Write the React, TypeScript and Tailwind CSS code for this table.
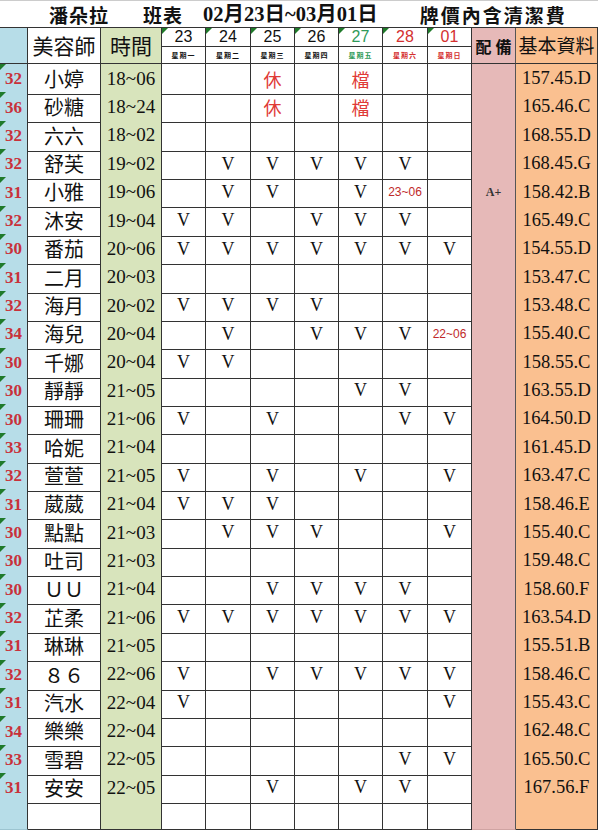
import React from "react";

const COLS =
  "grid grid-cols-[28px_73px_61px_44px_45px_44px_44px_44px_45px_44px_44px_82px]";

const serif = { fontFamily: '"Liberation Serif", "Noto Sans CJK TC", serif' };
const sans = { fontFamily: '"Liberation Sans", "Noto Sans CJK TC", sans-serif' };

type Row = {
  no: number;
  name: string;
  time: string;
  days: string[];
  gear?: string;
  info: string;
};

const E = ["", "", "", "", "", "", ""];

const rows: Row[] = [
  { no: 32, name: "小婷", time: "18~06", days: ["", "", "休", "", "檔", "", ""], info: "157.45.D" },
  { no: 36, name: "砂糖", time: "18~24", days: ["", "", "休", "", "檔", "", ""], info: "165.46.C" },
  { no: 32, name: "六六", time: "18~02", days: E, info: "168.55.D" },
  { no: 32, name: "舒芙", time: "19~02", days: ["", "V", "V", "V", "V", "V", ""], info: "168.45.G" },
  { no: 31, name: "小雅", time: "19~06", days: ["", "V", "V", "", "V", "23~06", ""], gear: "A+", info: "158.42.B" },
  { no: 32, name: "沐安", time: "19~04", days: ["V", "V", "", "V", "V", "V", ""], info: "165.49.C" },
  { no: 30, name: "番茄", time: "20~06", days: ["V", "V", "V", "V", "V", "V", "V"], info: "154.55.D" },
  { no: 31, name: "二月", time: "20~03", days: E, info: "153.47.C" },
  { no: 32, name: "海月", time: "20~02", days: ["V", "V", "V", "V", "", "", ""], info: "153.48.C" },
  { no: 34, name: "海兒", time: "20~04", days: ["", "V", "", "V", "V", "V", "22~06"], info: "155.40.C" },
  { no: 30, name: "千娜", time: "20~04", days: ["V", "V", "", "", "", "", ""], info: "158.55.C" },
  { no: 30, name: "靜靜", time: "21~05", days: ["", "", "", "", "V", "V", ""], info: "163.55.D" },
  { no: 30, name: "珊珊", time: "21~06", days: ["V", "", "V", "", "", "V", "V"], info: "164.50.D" },
  { no: 33, name: "哈妮", time: "21~04", days: E, info: "161.45.D" },
  { no: 32, name: "萱萱", time: "21~05", days: ["V", "", "V", "", "V", "", "V"], info: "163.47.C" },
  { no: 31, name: "葳葳", time: "21~04", days: ["V", "V", "V", "", "", "", ""], info: "158.46.E" },
  { no: 30, name: "點點", time: "21~03", days: ["", "V", "V", "V", "", "", "V"], info: "155.40.C" },
  { no: 30, name: "吐司", time: "21~03", days: E, info: "159.48.C" },
  { no: 30, name: "ＵＵ", time: "21~04", days: ["", "", "V", "V", "V", "V", ""], info: "158.60.F" },
  { no: 32, name: "芷柔", time: "21~06", days: ["V", "V", "V", "V", "V", "V", "V"], info: "163.54.D" },
  { no: 31, name: "琳琳", time: "21~05", days: E, info: "155.51.B" },
  { no: 32, name: "８６", time: "22~06", days: ["V", "", "V", "V", "V", "V", "V"], info: "158.46.C" },
  { no: 31, name: "汽水", time: "22~04", days: ["V", "", "", "", "", "", "V"], info: "155.43.C" },
  { no: 34, name: "樂樂", time: "22~04", days: E, info: "162.48.C" },
  { no: 33, name: "雪碧", time: "22~05", days: ["", "", "", "", "", "V", "V"], info: "165.50.C" },
  { no: 31, name: "安安", time: "22~05", days: ["", "", "V", "", "V", "V", ""], info: "167.56.F" },
];

const days = [
  { d: "23", w: "星期一", c: "text-[#111]" },
  { d: "24", w: "星期二", c: "text-[#111]" },
  { d: "25", w: "星期三", c: "text-[#111]" },
  { d: "26", w: "星期四", c: "text-[#111]" },
  { d: "27", w: "星期五", c: "text-[#2f9a5a]" },
  { d: "28", w: "星期六", c: "text-[#d42f2f]" },
  { d: "01", w: "星期日", c: "text-[#d42f2f]" },
];

function Tri() {
  return (
    <span className="absolute top-0 left-0 w-0 h-0 border-t-[6px] border-r-[6px] border-t-[#1f7a2a] border-r-transparent" />
  );
}

function DayCell({ v }: { v: string }) {
  if (v === "V") {
    return <span className="text-[18px] text-[#111]" style={serif}>V</span>;
  }
  if (v === "休" || v === "檔") {
    return <span className="text-[18px] text-[#e03a36]">{v}</span>;
  }
  if (v) {
    return <span className="text-[12px] text-[#c02a2a]" style={sans}>{v}</span>;
  }
  return null;
}

function DataRow({ r }: { r?: Row }) {
  const cell = "flex items-center justify-center border-r border-b border-[#333]";
  return (
    <div className={`${COLS} h-[28.37px]`}>
      <div className="relative flex items-center justify-center bg-[#b7dde8] border-r border-b border-r-[#333] border-b-[#9cc4d0]">
        {r && <Tri />}
        {r && (
          <span className="text-[17px] font-bold text-[#c8313a]" style={serif}>
            {r.no}
          </span>
        )}
      </div>
      <div className={`${cell} text-[20px] text-[#111]`}>{r?.name}</div>
      <div className={`${cell} bg-[#d8e4bc] text-[19px] text-[#111]`} style={serif}>
        {r?.time}
      </div>
      {(r ? r.days : E).map((v, i) => (
        <div key={i} className={cell}>
          <DayCell v={v} />
        </div>
      ))}
      <div className="flex items-center justify-center bg-[#e6b9b8] border-r border-b border-r-[#555] border-b-[#cfa3a2]">
        {r?.gear && (
          <span className="text-[12px] font-bold text-[#333]" style={serif}>
            {r.gear}
          </span>
        )}
      </div>
      <div className={`${cell} bg-[#fac090] text-[18.5px] text-[#111]`} style={serif}>
        {r?.info}
      </div>
    </div>
  );
}

export default function App() {
  return (
    <div
      className="w-[600px] h-[831px] bg-white overflow-hidden"
      style={{ fontFamily: '"Noto Sans CJK TC", "Liberation Serif", serif' }}
    >
      <div className="h-[28px] w-[598px] border-t border-t-[#ccc] border-b border-b-[#333] flex items-center text-[19px] font-bold text-[#111] leading-none">
        <span className="ml-[49px] tracking-[1px]">潘朵拉</span>
        <span className="ml-[34px] tracking-[1px]">班表</span>
        <span className="ml-[20px] text-[20.5px]" style={serif}>
          02月23日~03月01日
        </span>
        <span className="ml-[42px] tracking-[2px]">牌價內含清潔費</span>
      </div>

      <div className={`${COLS} h-[36px]`}>
        <div className="bg-[#b7dde8] border-r border-b border-r-[#333] border-b-[#333]" />
        <div className="flex items-center justify-center border-r border-b border-[#333] text-[21px] text-[#111]">
          美容師
        </div>
        <div className="flex items-center justify-center bg-[#d8e4bc] border-r border-b border-[#333] text-[21px] text-[#111]">
          時間
        </div>
        {days.map((d) => (
          <div key={d.d} className={`relative flex flex-col border-r border-b border-[#333] ${d.c}`}>
            <Tri />
            <div className="h-[19px] flex items-center justify-center border-b border-[#333] text-[16px] leading-none" style={sans}>
              {d.d}
            </div>
            <div className="flex-1 flex items-center justify-center text-[7px] font-bold leading-none tracking-[1px]">
              {d.w}
            </div>
          </div>
        ))}
        <div className="flex items-center justify-center bg-[#e6b9b8] border-r border-b border-r-[#555] border-b-[#333] text-[16px] font-bold text-[#111] gap-[4px]">
          <span>配</span>
          <span>備</span>
        </div>
        <div className="flex items-center justify-center bg-[#fac090] border-r border-b border-[#333] text-[19px] text-[#111]">
          基本資料
        </div>
      </div>

      {rows.map((r) => (
        <DataRow key={r.name} r={r} />
      ))}
      <DataRow />
    </div>
  );
}
